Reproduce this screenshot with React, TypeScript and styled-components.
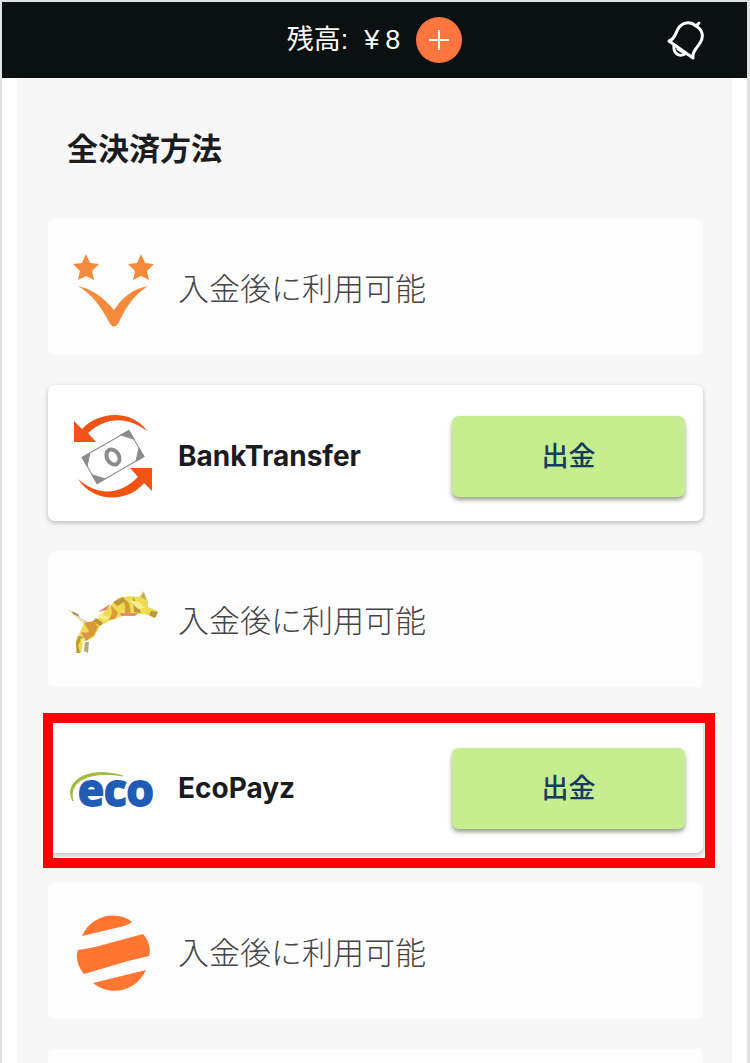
import React from "react";
import styled, { createGlobalStyle } from "styled-components";

const jp = `"Noto Sans CJK JP", sans-serif`;

const GlobalStyle = createGlobalStyle`
  *, *::before, *::after { box-sizing: border-box; }
  body {
    margin: 0;
    background: #ffffff;
    font-family: Inter, ${jp};
    color: #1b1c20;
  }
`;

const Screen = styled.div`
  height: 100vh;
  overflow: hidden;
  display: flex;
  flex-direction: column;
  border: solid #dfe1e3;
  border-width: 2px 3px 0 2px;
`;

const TopBar = styled.header`
  flex: none;
  display: grid;
  grid-template-columns: 1fr auto 1fr;
  align-items: center;
  height: 76px;
  padding: 0 40px;
  background: #0b1110;
  color: #ffffff;
`;

const Balance = styled.div`
  grid-column: 2;
  display: flex;
  align-items: center;
  gap: 16px;
  font-family: "Liberation Sans", ${jp};
  font-size: 27px;
  line-height: 36px;
`;

const Amount = styled.span`
  display: flex;
  gap: 6px;
`;

const AddButton = styled.button`
  display: grid;
  place-items: center;
  width: 46px;
  height: 46px;
  padding: 0;
  border: 0;
  border-radius: 50%;
  background: #ff7540;
  color: #ffffff;
`;

const BellButton = styled.button`
  justify-self: end;
  display: grid;
  width: 40px;
  height: 44px;
  padding: 0;
  border: 0;
  background: none;
  color: #ffffff;
`;

const Panel = styled.main`
  flex: 1;
  margin: 0 15px;
  padding: 46px 29px 0 31px;
  background: #f7f7f7;
`;

const Heading = styled.h1`
  margin: 0 0 49px;
  padding-left: 19px;
  font-family: ${jp};
  font-size: 31px;
  line-height: 46px;
  font-weight: 700;
`;

const MethodList = styled.ul`
  display: flex;
  flex-direction: column;
  gap: 30px;
  margin: 0;
  padding: 0;
  list-style: none;
`;

const MethodCard = styled.li<{ $active?: boolean }>`
  position: relative;
  display: flex;
  align-items: center;
  gap: 20px;
  height: 136px;
  padding: ${(p) => (p.$active ? "6px 18px 0 20px" : "0 18px 0 20px")};
  border-radius: 7px;
  background: ${(p) => (p.$active ? "#ffffff" : "#fdfdfd")};
  box-shadow: ${(p) => (p.$active ? "0 2px 5px rgba(0, 0, 0, 0.24)" : "none")};
`;

const Highlight = styled.span`
  position: absolute;
  inset: -4px -12px -15px -5px;
  border: 10px solid #ff0000;
  pointer-events: none;
`;

const Logo = styled.svg`
  flex: none;
  width: 90px;
  height: 90px;
`;

const MethodName = styled.span`
  flex: 1;
  font-size: 28px;
  line-height: 40px;
  font-weight: 700;
`;

const LockedText = styled.span`
  font-family: ${jp};
  font-size: 31px;
  line-height: 46px;
  font-weight: 300;
  color: #444444;
`;

const WithdrawButton = styled.button`
  width: 233px;
  height: 81px;
  padding: 0 0 4px;
  border: 0;
  border-radius: 7px;
  background: #c6ed90;
  box-shadow: 0 3px 4px rgba(50, 70, 20, 0.5);
  color: #173a5e;
  font-family: ${jp};
  font-size: 27px;
  font-weight: 500;
`;

const star = "M0-14 4-5 13-4 6 3 8 12 0 8-8 12-6 3-13-4-4-5Z";

const SmileLogo = () => (
  <Logo viewBox="0 0 90 90" aria-hidden="true">
    <g fill="#f68a3c">
      <path d={star} transform="translate(18 26)" />
      <path d={star} transform="translate(73 26)" />
      <path d="M10 44C26 48 36 56 46 68C54 56 64 47 80 44C65 54 58 65 51 80Q46 89 41 80C33 65 26 54 10 44Z" />
    </g>
  </Logo>
);

const BankLogo = () => (
  <Logo viewBox="0 0 90 90" aria-hidden="true">
    <g fill="#f05314">
      <path d="M6 10 14 18C29 1 63-3 79 20C59 5 38 6 20 22L28 31 6 31Z" />
      <path d="M84 80 76 72C61 91 26 93 10 68C31 86 52 84 70 66L62 57 84 57Z" />
    </g>
    <g transform="translate(45 46) rotate(-30)" stroke="#8b8b8b" strokeWidth="1" fill="none">
      <rect x="-27" y="-15" width="54" height="30" />
      <ellipse cx="0" cy="0" rx="6" ry="8" strokeWidth="4" />
      <path d="M-27-15H-18L-27-5ZM27-15V-5L18-15ZM-27 15V5L-18 15ZM27 15H18L27 5Z" fill="#8b8b8b" />
    </g>
  </Logo>
);

const TigerLogo = () => (
  <Logo viewBox="1 -14 90 90" aria-hidden="true">
    <path d="M0 21 8 25 21 37 17 36Z" fill="#ecdcb0" />
    <path d="M5 23 11 26 13 29 6 26ZM14 30 20 34 22 37Z" fill="#b78964" />
    <path d="M17 35 29 33 38 23 51 10 64 8 72 9 76 3 81 13 81 19 91 23 88 30 78 26 58 27 44 32 33 38 27 49 16 54 14 65 9 65 9 53 14 42Z" fill="#eedb52" />
    <path d="M17 35 27 33 31 39 27 47 19 53 16 48 22 43ZM44 17 51 25 48 31 42 32 45 25ZM56 10 62 15 64 24 58 27 58 18Z" fill="#d99b38" />
    <path d="M11 48 9 55 10 65 13 65 11 57 16 49ZM29 30 36 35 33 38 26 33ZM66 9 72 19 74 25 67 24ZM46 14 56 9 59 13 50 18ZM84 23 91 24 88 30 82 27Z" fill="#bd963b" />
    <path d="M14 44 21 45 17 50ZM53 25H71L68 28 54 28ZM31 24 43 16 40 22Z" fill="#e58c6c" />
    <path d="M34 25 42 30 38 32 30 29ZM62 12 72 14 78 20 71 21ZM13 51 18 50 16 57Z" fill="#f5ed8e" />
    <path d="M74 9 77 4 79 12ZM18 54H22L21 65 17 63Z" fill="#b5a67c" />
  </Logo>
);

const EcoLogo = () => (
  <Logo viewBox="0 0 90 90" aria-hidden="true">
    <path d="M5 58C-5 40 18 22 55 33C23 27-1 38 5 58Z" fill="#9dbb3b" stroke="#9dbb3b" />
    <text
      x="10"
      y="63"
      fill="#205cb5"
      stroke="#205cb5"
      strokeWidth="2"
      fontFamily="Open Sans, sans-serif"
      fontSize="44"
      fontWeight="700"
    >
      eco
    </text>
  </Logo>
);

const GlobeLogo = () => (
  <Logo viewBox="0 -2 90 90" aria-hidden="true">
    <g fill="#ff7630">
      <path d="M14 28C23 7 49 2 64 14Q60 17 52 19Z" />
      <path d="M10 42Q18 41 27 39L75 26C81 32 83 42 81 48L60 53 16 66C10 59 7 49 10 42Z" />
      <path d="M25 75 78 62C68 84 42 89 25 75Z" />
    </g>
  </Logo>
);

interface Method {
  id: string;
  logo?: React.ReactNode;
  name?: string;
  locked?: boolean;
  highlighted?: boolean;
}

const methods: Method[] = [
  { id: "smile", logo: <SmileLogo />, locked: true },
  { id: "bank", logo: <BankLogo />, name: "BankTransfer" },
  { id: "tiger", logo: <TigerLogo />, locked: true },
  { id: "eco", logo: <EcoLogo />, name: "EcoPayz", highlighted: true },
  { id: "globe", logo: <GlobeLogo />, locked: true },
  { id: "next" },
];

export default function App() {
  return (
    <>
      <GlobalStyle />
      <Screen>
        <TopBar>
          <Balance>
            <span>残高:</span>
            <Amount>
              <span>¥</span>
              <span>8</span>
            </Amount>
            <AddButton type="button" aria-label="入金">
              <svg width="22" height="22" viewBox="0 0 22 22" fill="none" stroke="currentColor" strokeWidth="2">
                <path d="M11 1V21M1 11H21" />
              </svg>
            </AddButton>
          </Balance>
          <BellButton type="button" aria-label="通知">
            <svg width="40" height="44" viewBox="0 0 40 44" fill="none" stroke="currentColor" strokeWidth="3" strokeLinejoin="round" strokeLinecap="round">
              <path d="M2 23C8 21 8 16 11 11C15 4 23 3 29 8C36 12 37 19 33 25C29 31 25 34 26 40Z" />
              <path d="M30 7 32 5M7 27C6 36 12 39 18 36M11 31 16 34" />
            </svg>
          </BellButton>
        </TopBar>
        <Panel>
          <Heading>全決済方法</Heading>
          <MethodList>
            {methods.map((m) => (
              <MethodCard key={m.id} $active={Boolean(m.name)}>
                {m.logo}
                {m.locked && <LockedText>入金後に利用可能</LockedText>}
                {m.name && (
                  <>
                    <MethodName>{m.name}</MethodName>
                    <WithdrawButton type="button">出金</WithdrawButton>
                  </>
                )}
                {m.highlighted && <Highlight />}
              </MethodCard>
            ))}
          </MethodList>
        </Panel>
      </Screen>
    </>
  );
}
